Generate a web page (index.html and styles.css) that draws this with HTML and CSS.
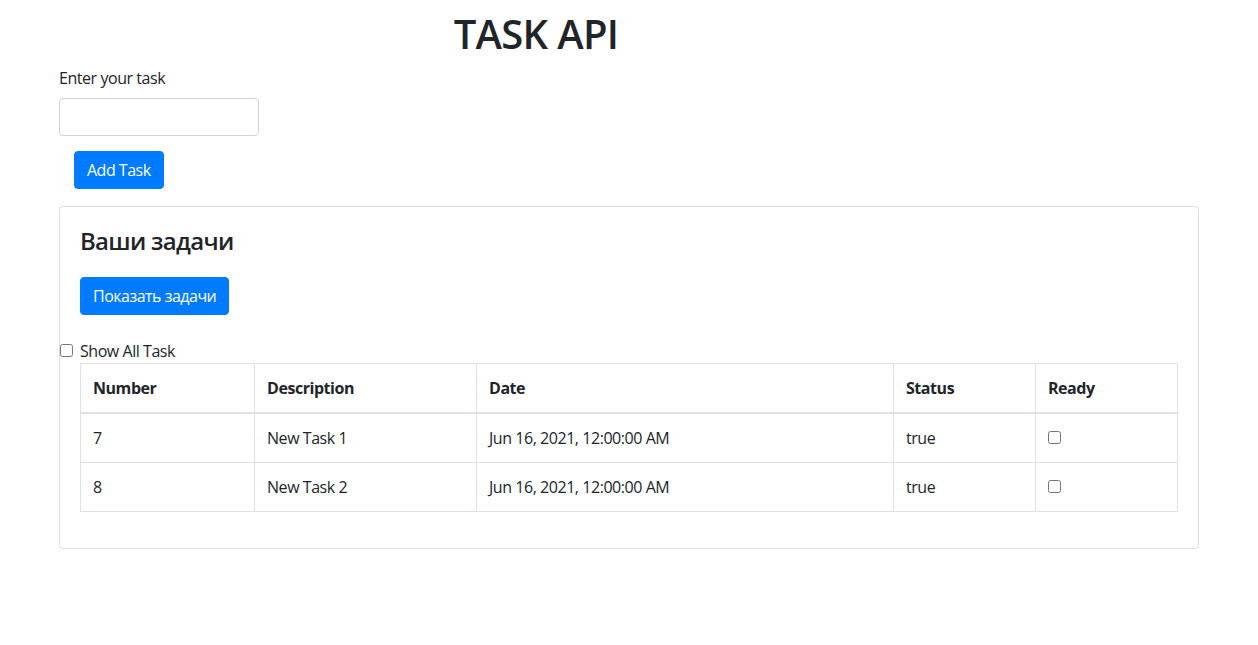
FILE: index.html
```html
<!DOCTYPE html>
<html lang="ru">
<head>
<meta charset="utf-8">
<title>TASK API</title>
<link rel="stylesheet" href="styles.css">
</head>
<body>
<div class="container">
  <div class="header">
    <h1 class="title">TASK API</h1>
  </div>
  <div class="form-group">
    <label class="label" for="task">Enter your task</label>
    <input class="input" id="task" type="text">
  </div>
  <button class="btn btn-add">Add Task</button>
  <div class="card">
    <div class="card-body">
      <h4 class="card-title">Ваши задачи</h4>
      <button class="btn">Показать задачи</button>
      <div class="form-check">
        <input class="check-input" type="checkbox" id="showall">
        <label class="check-label" for="showall">Show All Task</label>
      </div>
      <table class="table">
        <colgroup>
          <col class="c1"><col class="c2"><col class="c3"><col class="c4"><col class="c5">
        </colgroup>
        <thead>
          <tr><th>Number</th><th>Description</th><th>Date</th><th>Status</th><th>Ready</th></tr>
        </thead>
        <tbody>
          <tr><td>7</td><td>New Task 1</td><td>Jun 16, 2021, 12:00:00 AM</td><td>true</td><td><input class="row-check" type="checkbox"></td></tr>
          <tr><td>8</td><td>New Task 2</td><td>Jun 16, 2021, 12:00:00 AM</td><td>true</td><td><input class="row-check" type="checkbox"></td></tr>
        </tbody>
      </table>
    </div>
  </div>
</div>
</body>
</html>
```
FILE: styles.css
```css
* { box-sizing: border-box; }
html, body { margin: 0; padding: 0; background: #fff; }
body {
  font-family: "Open Sans", "Noto Sans", sans-serif;
  font-size: 16px;
  line-height: 1.5;
  color: #212529;
  letter-spacing: -0.45px;
}
.container { width: 1140px; margin: 0 auto; }
.header { width: 954px; text-align: center; }
.title {
  margin: 10px 0 8px;
  font-size: 40px;
  line-height: 1.2;
  font-weight: 600;
  letter-spacing: -0.7px;
}
.form-group { display: flex; flex-direction: column; align-items: flex-start; }
.label { display: block; margin-bottom: 8px; }
.input {
  width: 200px;
  height: 38px;
  border: 1px solid #ced4da;
  border-radius: 4px;
  padding: 6px 12px;
  font: inherit;
}
.btn {
  display: inline-block;
  font: inherit;
  letter-spacing: -0.5px;
  color: #fff;
  background: #007bff;
  border: 1px solid #007bff;
  border-radius: 4px;
  padding: 6px 12px;
  line-height: 24px;
  height: 38px;
  cursor: pointer;
}
.btn-add { margin: 15px 0 17px 15px; }
.card {
  border: 1px solid rgba(0,0,0,.125);
  border-radius: 4px;
}
.card-body { padding: 20px; }
.card-title {
  margin: 0 0 21px;
  font-size: 24px;
  line-height: 1.2;
  font-weight: 600;
  letter-spacing: -0.7px;
}
.form-check {
  position: relative;
  margin-top: 24px;
  line-height: 24px;
}
.check-input {
  position: absolute;
  left: -20px;
  top: 5px;
  width: 13px;
  height: 13px;
  margin: 0;
}
.table {
  width: 100%;
  table-layout: fixed;
  border-collapse: collapse;
  margin-bottom: 16px;
}
.c1 { width: 174px; }
.c2 { width: 222px; }
.c3 { width: 417px; }
.c4 { width: 142px; }
.c5 { width: 142px; }
.table th, .table td {
  border: 1px solid #dee2e6;
  padding: 12px;
  text-align: left;
  vertical-align: top;
  line-height: 24px;
}
.table th { font-weight: 700; }
.table thead th { border-bottom-width: 2px; }
.row-check { width: 13px; height: 13px; margin: 5px 0 0 0; vertical-align: top; }
```
